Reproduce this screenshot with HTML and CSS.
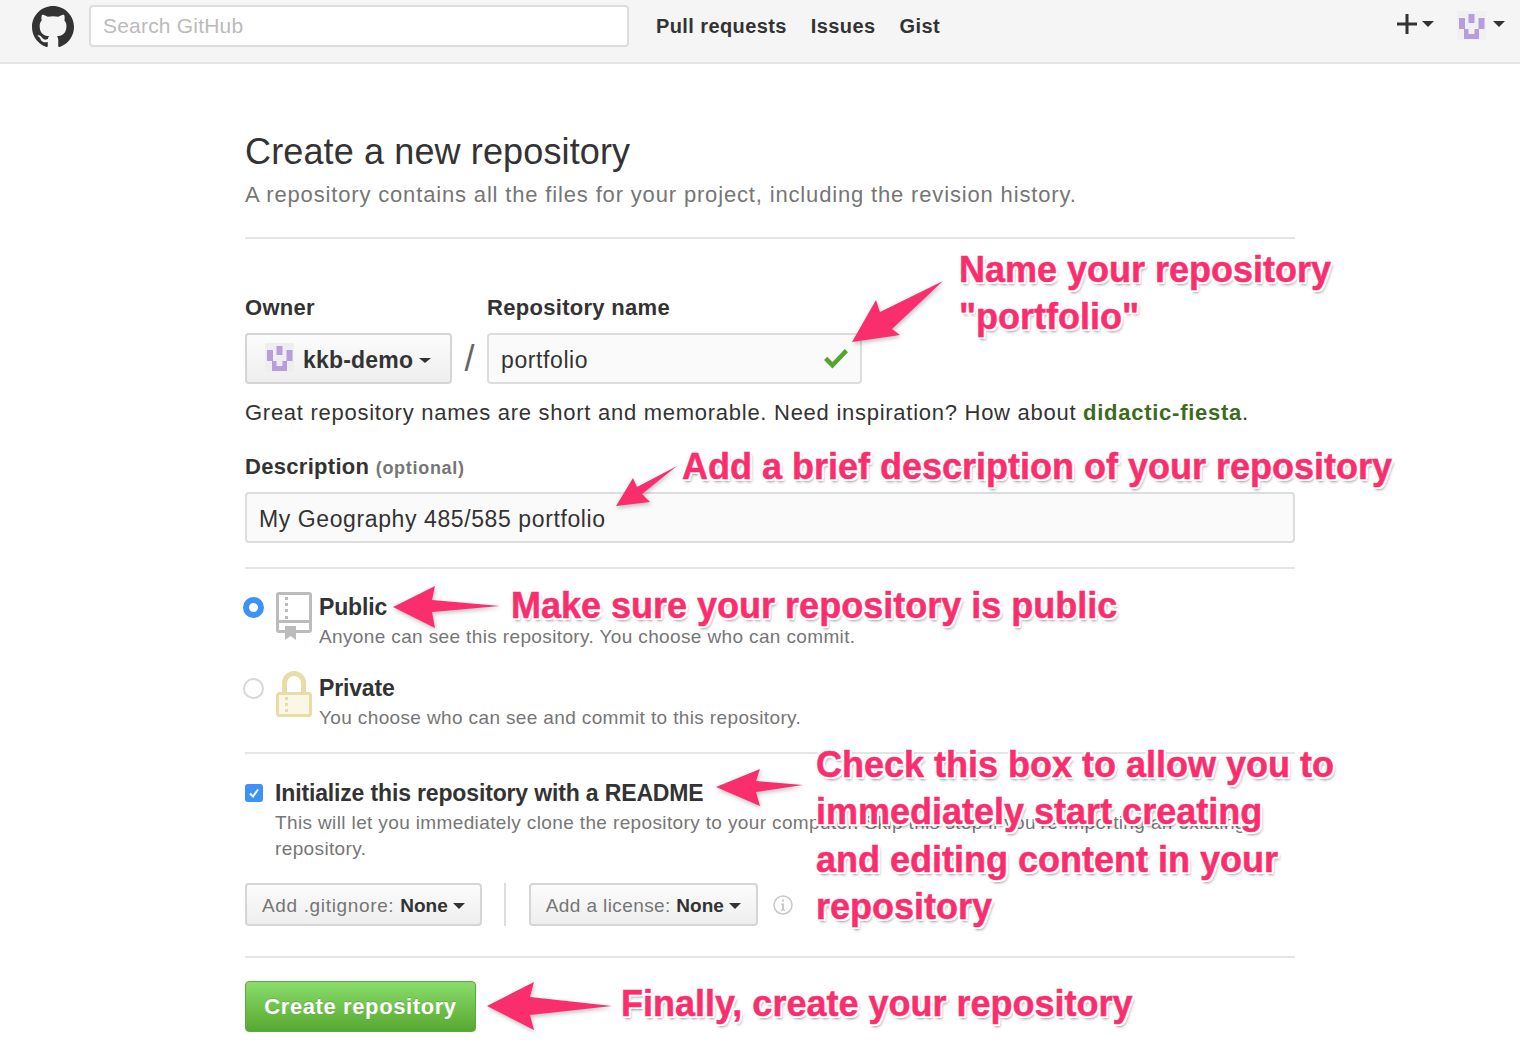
FILE: index.html
```html
<!DOCTYPE html>
<html>
<head>
  <title>Create a new repository</title>
  <link rel="stylesheet" href="styles.css">
</head>
<body>
  <header class="top-bar">
    <svg class="logo" viewBox="0 0 16 16"><path d="M8 0C3.58 0 0 3.58 0 8c0 3.54 2.29 6.53 5.47 7.59.4.07.55-.17.55-.38 0-.19-.01-.82-.01-1.49-2.01.37-2.53-.49-2.69-.94-.09-.23-.48-.94-.82-1.13-.28-.15-.68-.52-.01-.53.63-.01 1.08.58 1.23.82.72 1.21 1.87.87 2.33.66.07-.52.28-.87.51-1.07-1.78-.2-3.64-.89-3.64-3.95 0-.87.31-1.59.82-2.15-.08-.2-.36-1.02.08-2.12 0 0 .67-.21 2.2.82.64-.18 1.32-.27 2-.27.68 0 1.36.09 2 .27 1.53-1.04 2.2-.82 2.2-.82.44 1.1.16 1.92.08 2.12.51.56.82 1.27.82 2.15 0 3.07-1.87 3.75-3.65 3.95.29.25.54.73.54 1.48 0 1.07-.01 1.93-.01 2.2 0 .21.15.46.55.38A8.013 8.013 0 0016 8c0-4.42-3.58-8-8-8z"/></svg>
    <div class="search">Search GitHub</div>
    <nav class="top-nav">
      <a>Pull requests</a>
      <a>Issues</a>
      <a>Gist</a>
    </nav>
    <div class="top-right">
      <svg class="plus" viewBox="0 0 20 20"><path d="M8.5 0h3v8.5H20v3h-8.5V20h-3v-8.5H0v-3h8.5z"/></svg>
      <span class="caret"></span>
      <svg class="avatar top-avatar" viewBox="0 0 29 29"><rect width="29" height="29" fill="#f0f0f0"/><path fill="#b79ddc" d="M2 7h6v11H2zM21.500 7h6v11h-6zM11.500 3h6v9h-6zM7 18h4.500v5h6v-5H22v10H7z"/></svg>
      <span class="caret"></span>
    </div>
  </header>

  <main class="page">
    <h1>Create a new repository</h1>
    <p class="lead">A repository contains all the files for your project, including the revision history.</p>
    <hr class="rule first-rule">

    <div class="name-row">
      <div>
        <label class="field-label">Owner</label>
        <div class="owner-select">
          <svg class="avatar" viewBox="0 0 29 29"><rect width="29" height="29" fill="#eeeeee"/><path fill="#b79ddc" d="M2 7h6v11H2zM21.500 7h6v11h-6zM11.500 3h6v9h-6zM7 18h4.500v5h6v-5H22v10H7z"/></svg>
          <span>kkb-demo</span>
          <span class="caret small"></span>
        </div>
      </div>
      <span class="slash">/</span>
      <div>
        <label class="field-label">Repository name</label>
        <div class="text-input name-input">
          portfolio
          <svg class="check" viewBox="0 0 24 20"><path d="M8.500 19.500 0 11l3.200-3.200 5.300 5.300L20.800 0 24 3.200z"/></svg>
        </div>
      </div>
    </div>
    <p class="hint">Great repository names are short and memorable. Need inspiration? How about <b class="suggest">didactic-fiesta</b>.</p>

    <label class="field-label desc-label">Description <span class="optional">(optional)</span></label>
    <div class="text-input desc-input">My Geography 485/585 portfolio</div>
    <hr class="rule desc-rule">

    <div class="visibility">
      <span class="radio on"></span>
      <svg class="vis-icon" viewBox="0 0 36 48"><path fill="#bcbcbc" fill-rule="evenodd" d="M3 0h30a3 3 0 0 1 3 3v35a3 3 0 0 1-3 3H3a3 3 0 0 1-3-3V3a3 3 0 0 1 3-3zm0 3v25h30V3zm0 28v7h30v-7z"/><path fill="#bcbcbc" d="M9 5h3v3H9zM9 11h3v3H9zM9 17h3v3H9zM9 24h3v3H9zM9 34h11v14l-5.500-4-5.500 4z"/></svg>
      <div>
        <div class="vis-title">Public</div>
        <div class="vis-note">Anyone can see this repository. You choose who can commit.</div>
      </div>
    </div>
    <div class="visibility private">
      <span class="radio"></span>
      <svg class="vis-icon" viewBox="0 0 36 48"><path fill="#e8dca8" d="M6 21v-9a12 12 0 0 1 24 0v9h-5v-9a7 7 0 0 0-14 0v9z"/><rect x="1.500" y="22.500" width="33" height="22" rx="2" fill="#fbf7e6" stroke="#e8dca8" stroke-width="3"/><path fill="#e8dca8" d="M9 26h3v3H9zM9 32h3v3H9zM9 38h3v3H9z"/></svg>
      <div>
        <div class="vis-title">Private</div>
        <div class="vis-note">You choose who can see and commit to this repository.</div>
      </div>
    </div>
    <hr class="rule vis-rule">

    <div class="readme">
      <span class="checkbox"><svg viewBox="0 0 12 12"><path d="M2 6.500 5 9.500 10 2.500" fill="none" stroke="#fff" stroke-width="2"/></svg></span>
      <div>
        <div class="vis-title">Initialize this repository with a README</div>
        <div class="vis-note readme-note">This will let you immediately clone the repository to your computer. Skip this step if you’re importing an existing repository.</div>
      </div>
    </div>

    <div class="extras">
      <div class="small-select gitignore"><span class="select-label">Add .gitignore: </span><b>None</b><span class="caret"></span></div>
      <span class="extras-sep"></span>
      <div class="small-select license"><span class="select-label">Add a license: </span><b>None</b><span class="caret"></span></div>
      <svg class="info" viewBox="0 0 20 20"><circle cx="10" cy="10" r="9" fill="none" stroke="#c8c8c8" stroke-width="1.500"/><path fill="#c8c8c8" d="M9 4.500h2v2H9zM8 8.500h3v6h1.200v1.200H7.800v-1.200H9v-4.800H8z"/></svg>
    </div>
    <hr class="rule extras-rule">

    <button class="create-btn">Create repository</button>
  </main>

  <!-- annotations pasted over the screenshot -->
  <svg class="arrows" viewBox="0 0 1520 1052">
    <polygon points="852,342 876,300 880,312 943,281 892,329 900,335"/>
    <polygon points="616,506 633,478 637,487 677,466 642,494 650,502"/>
    <polygon points="393,607 435,586 432,600 500,606 432,612 435,628"/>
    <polygon points="716,787 760,769 756,781 803,785 756,792 760,806"/>
    <polygon points="487,1006 534,982 530,997 612,1006 530,1015 534,1030"/>
  </svg>
  <div class="note note-name">Name your repository<br>"portfolio"</div>
  <div class="note note-desc">Add a brief description of your repository</div>
  <div class="note note-public">Make sure your repository is public</div>
  <div class="note note-readme">Check this box to allow you to<br>immediately start creating<br>and editing content in your<br>repository</div>
  <div class="note note-create">Finally, create your repository</div>
</body>
</html>
```

FILE: styles.css
```css
body {
  margin: 0;
  height: 1052px;
  overflow: hidden;
  position: relative;
  background-color: #fff;
  color: #333;
  font-family: "Liberation Sans", Arial, sans-serif;
  font-size: 21px;
}

/* top bar */
.top-bar {
  display: flex;
  align-items: center;
  box-sizing: border-box;
  height: 64px;
  padding: 0 15px 10px 32px;
  background-color: #f5f5f5;
  border-bottom: 2px solid #e5e5e5;
}

.logo {
  width: 42px;
  height: 42px;
  fill: #333;
  margin-right: 15px;
  margin-top: 2px;
}

.search {
  box-sizing: border-box;
  width: 540px;
  height: 42px;
  padding: 0 12px;
  line-height: 37px;
  font-size: 21px;
  letter-spacing: 0.2px;
  color: #bbb;
  background-color: #fff;
  border: 2px solid #ddd;
  border-radius: 4px;
}

.top-nav {
  display: flex;
  gap: 24px;
  margin-left: 27px;
  font-weight: bold;
  font-size: 20px;
  letter-spacing: 0.4px;
}

.top-right {
  display: flex;
  align-items: center;
  margin-left: auto;
  margin-top: -4px;
}

.plus {
  width: 20px;
  height: 20px;
  fill: #333;
}

.caret {
  display: inline-block;
  width: 0;
  height: 0;
  margin-left: 5px;
  border-top: 6px solid #333;
  border-left: 6px solid transparent;
  border-right: 6px solid transparent;
}

.caret.small {
  margin-left: 6px;
  border-width: 5px 6px 0;
  border-top-color: #333;
}

.avatar {
  flex: none;
  width: 29px;
  height: 29px;
}

.top-avatar {
  margin: 3px 2px 0 23px;
}

/* form */
.page {
  width: 1050px;
  margin-left: 245px;
}

h1 {
  margin: 63px 0 0;
  font-size: 36px;
  font-weight: normal;
  line-height: 50px;
  letter-spacing: 0.13px;
}

.lead {
  margin: 3px 0 0;
  color: #767676;
  font-size: 22px;
  line-height: 30px;
  letter-spacing: 0.84px;
}

.rule {
  height: 2px;
  margin: 0;
  border: 0;
  background-color: #e5e5e5;
}

.first-rule {
  margin-top: 27px;
}

.name-row {
  display: flex;
  align-items: flex-end;
  margin-top: 56px;
}

.field-label {
  display: block;
  font-weight: bold;
  font-size: 22px;
  line-height: 26px;
  letter-spacing: 0.3px;
}

.owner-select {
  display: flex;
  align-items: center;
  box-sizing: border-box;
  width: 207px;
  height: 51px;
  margin-top: 12px;
  padding: 4px 0 0 18px;
  font-weight: bold;
  font-size: 23px;
  letter-spacing: 0.2px;
  background: linear-gradient(#fcfcfc, #eee);
  border: 2px solid #d5d5d5;
  border-radius: 4px;
}

.owner-select .avatar {
  margin-top: -7px;
}

.owner-select span:first-of-type {
  margin-left: 9px;
}

.slash {
  width: 35px;
  text-align: center;
  font-size: 36px;
  line-height: 50px;
  color: #666;
}

.text-input {
  box-sizing: border-box;
  height: 51px;
  margin-top: 12px;
  padding: 4px 12px 0;
  line-height: 43px;
  font-size: 23px;
  letter-spacing: 0.6px;
  background-color: #fafafa;
  border: 2px solid #ddd;
  border-radius: 4px;
}

.name-input {
  display: flex;
  align-items: center;
  justify-content: space-between;
  width: 375px;
}

.check {
  width: 24px;
  height: 20px;
  margin-top: -4px;
  fill: #55a532;
}

.hint {
  margin: 16px 0 0;
  line-height: 26px;
  font-size: 22px;
  letter-spacing: 0.73px;
}

.suggest {
  color: #3d6b1e;
}

.desc-label {
  margin-top: 28px;
}

.optional {
  color: #767676;
  font-size: 18px;
  letter-spacing: 0.7px;
}

.desc-input {
  margin-top: 11px;
}

.desc-rule {
  margin-top: 24px;
}

.visibility {
  display: flex;
  margin-top: 23px;
}

.visibility.private {
  margin-top: 23px;
}

.radio {
  box-sizing: border-box;
  width: 21px;
  height: 21px;
  margin: 5px 0 0 -2px;
  border: 2px solid #d8d8d8;
  border-radius: 50%;
  background-color: #fff;
}

.radio.on {
  border: 6px solid #3d92f5;
}

.vis-icon {
  width: 36px;
  height: 48px;
  margin: 0 7px 0 12px;
}

.private .vis-icon {
  margin-top: -2px;
}

.vis-title {
  font-weight: bold;
  font-size: 23px;
  line-height: 30px;
  letter-spacing: -0.15px;
}

.vis-note {
  color: #767676;
  font-size: 19px;
  line-height: 26px;
  letter-spacing: 0.37px;
  margin-top: 2px;
}

.vis-rule {
  margin-top: 21px;
}

.readme {
  display: flex;
  margin-top: 24px;
}

.checkbox {
  display: flex;
  box-sizing: border-box;
  flex: none;
  width: 18px;
  height: 18px;
  margin: 6px 12px 0 0;
  padding: 3px;
  background-color: #3d92f5;
  border-radius: 3px;
}

.readme-note {
  width: 1015px;
}

.extras {
  display: flex;
  align-items: center;
  margin-top: 21px;
}

.small-select {
  display: flex;
  align-items: center;
  box-sizing: border-box;
  height: 43px;
  padding: 2px 15px 0;
  font-size: 19px;
  white-space: pre;
  background: linear-gradient(#fcfcfc, #eee);
  border: 2px solid #d5d5d5;
  border-radius: 4px;
}

.select-label {
  color: #767676;
  letter-spacing: 0.65px;
}

.license .select-label {
  letter-spacing: 0.4px;
}

.small-select b {
  color: #333;
}

.extras-sep {
  width: 2px;
  height: 43px;
  margin: 0 23px 0 22px;
  background-color: #ddd;
}

.info {
  width: 20px;
  height: 20px;
  margin-left: 15px;
}

.extras-rule {
  margin-top: 30px;
}

.create-btn {
  display: block;
  width: 231px;
  height: 51px;
  margin-top: 23px;
  padding: 0;
  color: #fff;
  font-family: inherit;
  font-weight: bold;
  font-size: 22px;
  letter-spacing: 0.6px;
  background: linear-gradient(#8add6d, #57a82f);
  border: 1px solid #5ca941;
  border-radius: 4px;
  text-shadow: 0 -1px 0 rgba(0, 0, 0, 0.15);
}

/* annotations */
.arrows {
  position: absolute;
  top: 0;
  left: 0;
  width: 1520px;
  height: 1052px;
  fill: #fb2e6d;
  filter: drop-shadow(1px 2px 2px rgba(0, 0, 0, 0.25));
}

.note {
  position: absolute;
  color: #fb2e6d;
  font-weight: bold;
  font-size: 36px;
  line-height: 47.300px;
  white-space: nowrap;
  -webkit-text-stroke: 0.5px #fb2e6d;
  text-shadow:
    -2px 0 0 #fff, 2px 0 0 #fff, 0 -2px 0 #fff, 0 2px 0 #fff,
    -2px -2px 0 #fff, 2px -2px 0 #fff, -2px 2px 0 #fff, 2px 2px 0 #fff,
    2px 3px 3px rgba(0, 0, 0, 0.4);
}

.note-name { left: 959px; top: 246px; }
.note-desc { left: 682px; top: 443px; }
.note-public { left: 511px; top: 582px; }
.note-readme { left: 816px; top: 741px; }
.note-create { left: 621px; top: 980px; }
```
